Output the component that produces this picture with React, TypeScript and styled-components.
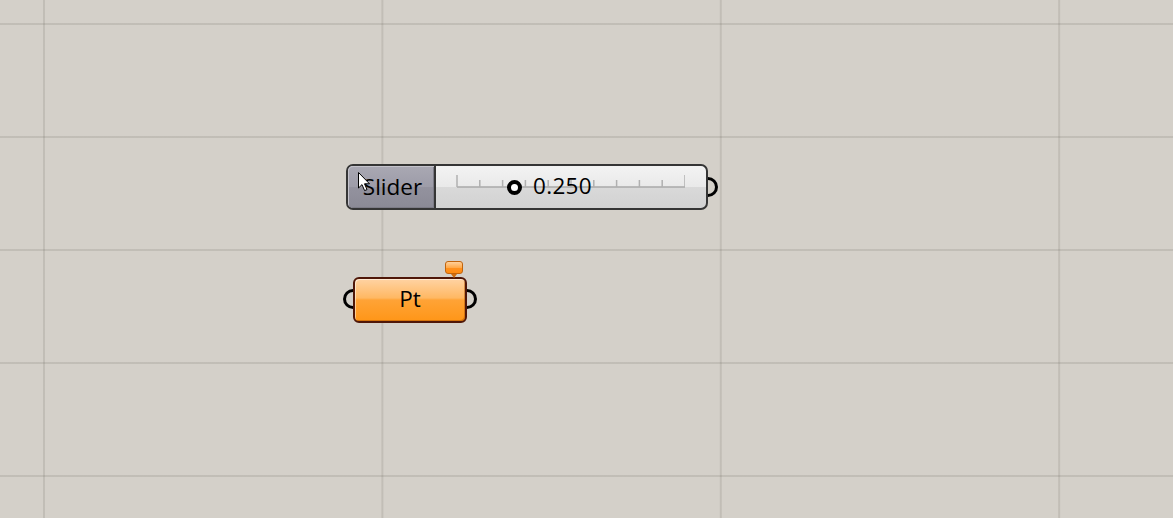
import * as React from 'react';
import styled, { createGlobalStyle } from 'styled-components';

const GlobalStyle = createGlobalStyle`
  html, body {
    margin: 0;
    padding: 0;
    width: 100%;
    height: 100%;
    overflow: hidden;
  }
  #root {
    height: 100%;
  }
`;

const GRID_LINE = 'rgba(90, 85, 75, 0.15)';

const Canvas = styled.div`
  position: relative;
  width: 1173px;
  height: 518px;
  background-color: #d4d0c9;
  background-image:
    linear-gradient(to right, ${GRID_LINE} 2px, transparent 2px),
    linear-gradient(to bottom, ${GRID_LINE} 2px, transparent 2px);
  background-size: 338.4px 100%, 100% 113px;
  background-position: 43px 0, 0 23px;
  font-family: 'Open Sans', 'Noto Sans', sans-serif;
  color: #000;
`;

// nodes sit on a free canvas, so their place is their content
const Node = styled.div<{ x: number; y: number }>`
  position: absolute;
  left: ${p => p.x}px;
  top: ${p => p.y}px;
`;

const SliderBody = styled.div`
  display: flex;
  width: 362px;
  height: 46px;
  box-sizing: border-box;
  border: 2px solid #353535;
  border-radius: 7px;
  overflow: hidden;
  background: linear-gradient(to bottom, #f3f3f3 0%, #e9e9e9 50%, #d9d9d9 51%, #d2d2d2 100%);
`;

const SliderLabel = styled.div`
  display: flex;
  align-items: center;
  justify-content: center;
  width: 88px;
  box-sizing: border-box;
  border-right: 2px solid #353535;
  border-radius: 4px 0 0 4px;
  box-shadow: inset 1px 1px 0 #c4c3cb, inset -1px -1px 0 #7c7b86;
  background: linear-gradient(to bottom, #a9a8b3 0%, #9d9ca8 50%, #93929e 51%, #8b8a96 100%);
  font-size: 22.5px;
  padding: 0 0 2px 3px;
`;

const SliderTrack = styled.div`
  display: flex;
  align-items: flex-start;
  flex: 1;
  padding: 6px 0 0 17px;
`;

const ScaleArea = styled.div`
  position: relative;
  width: 232px;
  height: 24px;
`;

const Grip = styled.span`
  position: absolute;
  left: 54px;
  top: 8px;
  width: 15px;
  height: 15px;
  box-sizing: border-box;
  border: 4px solid #000;
  border-radius: 50%;
  background: #fff;
`;

const Value = styled.span`
  position: absolute;
  left: 80px;
  top: -2px;
  font-size: 22.5px;
  letter-spacing: 0.3px;
`;

const Port = styled.span<{ side: 'in' | 'out'; y: number }>`
  position: absolute;
  top: ${p => p.y}px;
  ${p => (p.side === 'out' ? 'right: -10px;' : 'left: -10px;')}
  width: 10px;
  height: 20px;
  box-sizing: border-box;
  border: 3.5px solid #000;
  ${p => (p.side === 'out'
    ? 'border-left: none; border-radius: 0 10px 10px 0;'
    : 'border-right: none; border-radius: 10px 0 0 10px;')}
`;

const ParamBody = styled.div`
  display: flex;
  align-items: center;
  justify-content: center;
  width: 114px;
  height: 46px;
  box-sizing: border-box;
  border: 2px solid #4f1708;
  border-radius: 6px;
  background: linear-gradient(to bottom, #ffd3a3 0%, #ffb863 45%, #ffa336 50%, #ff9618 100%);
  box-shadow: inset 1px 1px 0 rgba(255, 255, 255, 0.5), inset -1px -1px 0 rgba(170, 80, 0, 0.5);
  font-size: 22.5px;
  padding-bottom: 4px;
`;

const Flag = styled.span`
  position: absolute;
  left: 92px;
  top: -16px;
  width: 18px;
  height: 13px;
  box-sizing: border-box;
  border: 1px solid #c2640c;
  border-radius: 3px;
  background: linear-gradient(to bottom, #ffd09a 0%, #ffab4d 50%, #ff9220 51%, #ff8a10 100%);

  &::after {
    content: '';
    position: absolute;
    left: 5px;
    bottom: -5px;
    border-left: 3px solid transparent;
    border-right: 3px solid transparent;
    border-top: 4px solid #d06c10;
  }
`;

const Cursor = styled.svg`
  position: absolute;
  left: 358px;
  top: 172px;
`;

const ticks = Array.from({ length: 11 }, (_, i) => i * 22.8);

const App = () => (
  <Canvas>
    <GlobalStyle />

    <Node x={346} y={164}>
      <SliderBody>
        <SliderLabel>Slider</SliderLabel>
        <SliderTrack>
          <ScaleArea>
            <svg width="232" height="24" viewBox="0 0 232 24">
              <line x1="4" y1="15" x2="232" y2="15" stroke="#a9a9a9" strokeWidth="1.5" />
              {ticks.map((t, i) => {
                const end = i === 0 || i === ticks.length - 1;
                return (
                  <line
                    key={i}
                    x1={4 + t}
                    y1={end ? 3 : 8}
                    x2={4 + t}
                    y2={15}
                    stroke="#b0b0b0"
                    strokeWidth="1.5"
                  />
                );
              })}
            </svg>
            <Grip />
            <Value>0.250</Value>
          </ScaleArea>
        </SliderTrack>
      </SliderBody>
      <Port side="out" y={13} />
    </Node>

    <Node x={353} y={277}>
      <Flag />
      <ParamBody>Pt</ParamBody>
      <Port side="in" y={12} />
      <Port side="out" y={12} />
    </Node>

    <Cursor width="13" height="20" viewBox="0 0 13 20">
      <path
        d="M0.5 0.5 L0.5 16 L4 12.6 L6.6 18.6 L9 17.6 L6.5 11.8 L11.5 11.8 Z"
        fill="#fff"
        stroke="#000"
        strokeWidth="1"
        strokeLinejoin="miter"
      />
    </Cursor>
  </Canvas>
);

export default App;
